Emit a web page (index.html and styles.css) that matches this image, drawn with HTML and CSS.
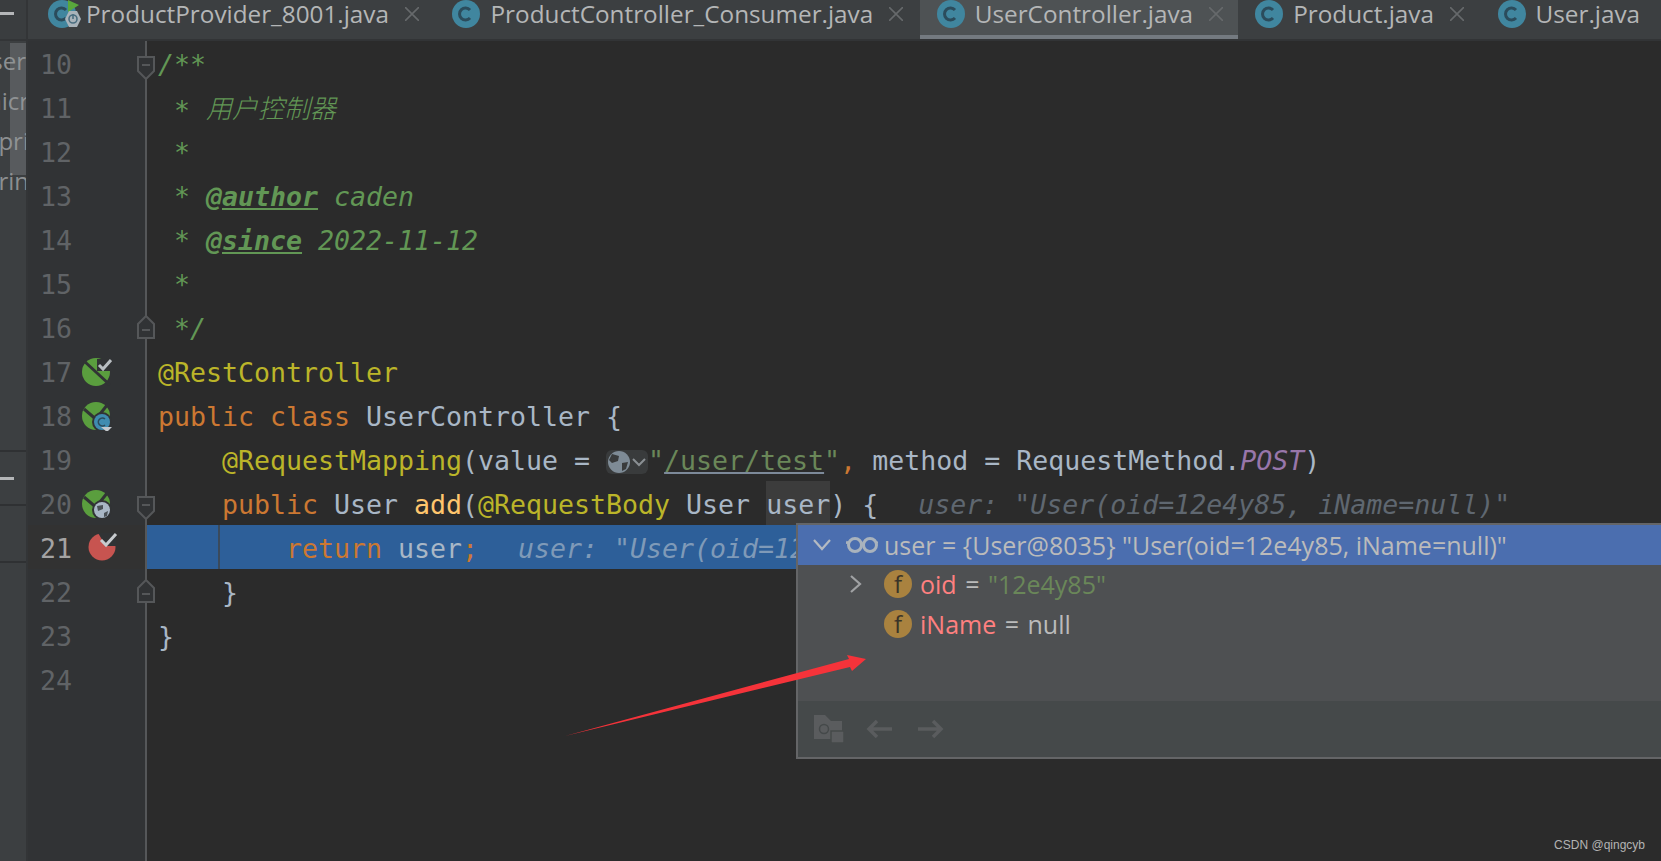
FILE: index.html
```html
<!DOCTYPE html>
<html lang="en">
<head>
<meta charset="utf-8">
<title>UserController.java</title>
<link rel="stylesheet" href="styles.css">
</head>
<body>
<div class="ide">
  <aside class="stripe">
    <div class="stripe-head"><span class="dash"></span></div>
    <div class="tree">
      <div class="tree-row exact"><span>user</span></div>
      <div class="tree-row"><span>micr</span></div>
      <div class="tree-row"><span>spri</span></div>
      <div class="tree-row"><span>sprin</span></div>
      <div class="tree-thumb"></div>
    </div>
    <div class="stripe-sec s1"><span class="dash"></span></div>
    <div class="stripe-sec s2"></div>
  </aside>
  <main class="main">
    <nav class="tabs">
      <div class="tab first">
        <svg class="ticon" viewBox="0 0 34 28"><circle cx="14" cy="14" r="14" fill="#40869f"/><path d="M18 10a6 6 0 1 0 0 8" fill="none" stroke="#2b4c5c" stroke-width="3"/><path d="M20 0l11 5-11 7z" fill="#59a83c"/><path d="M21 11l8 0 4 8-4 8-8 0-4-8z" fill="#a9b3ba"/><circle cx="25" cy="19" r="4" fill="none" stroke="#4b6e80" stroke-width="1.6"/><path d="M25 14v5" stroke="#4b6e80" stroke-width="1.6"/></svg>
        <span class="tname">ProductProvider_8001.java</span>
        <svg class="tclose" viewBox="0 0 14 14"><path d="M0 0l14 14M14 0L0 14"/></svg>
      </div>
      <div class="tab">
        <svg class="cicon" viewBox="0 0 28 28"><circle cx="14" cy="14" r="14" fill="#40869f"/><path d="M18 10a6 6 0 1 0 0 8" fill="none" stroke="#2b4c5c" stroke-width="3"/></svg>
        <span class="tname">ProductController_Consumer.java</span>
        <svg class="tclose" viewBox="0 0 14 14"><path d="M0 0l14 14M14 0L0 14"/></svg>
      </div>
      <div class="tab active">
        <svg class="cicon" viewBox="0 0 28 28"><circle cx="14" cy="14" r="14" fill="#40869f"/><path d="M18 10a6 6 0 1 0 0 8" fill="none" stroke="#2b4c5c" stroke-width="3"/></svg>
        <span class="tname">UserController.java</span>
        <svg class="tclose" viewBox="0 0 14 14"><path d="M0 0l14 14M14 0L0 14"/></svg>
      </div>
      <div class="tab">
        <svg class="cicon" viewBox="0 0 28 28"><circle cx="14" cy="14" r="14" fill="#40869f"/><path d="M18 10a6 6 0 1 0 0 8" fill="none" stroke="#2b4c5c" stroke-width="3"/></svg>
        <span class="tname">Product.java</span>
        <svg class="tclose" viewBox="0 0 14 14"><path d="M0 0l14 14M14 0L0 14"/></svg>
      </div>
      <div class="tab">
        <svg class="cicon" viewBox="0 0 28 28"><circle cx="14" cy="14" r="14" fill="#40869f"/><path d="M18 10a6 6 0 1 0 0 8" fill="none" stroke="#2b4c5c" stroke-width="3"/></svg>
        <span class="tname">User.java</span>
      </div>
    </nav>
    <section class="editor">
      <div class="line"><div class="gut"><span class="num">10</span><svg class="fold open" viewBox="0 0 18 24"><path d="M1 1h16v14l-8 8-8-8z"/><path d="M5 9h8"/></svg></div><div class="code"><span class="cm">/**</span></div></div>
      <div class="line"><div class="gut"><span class="num">11</span></div><div class="code"><span class="cm"> * <span class="cjk">用户控制器</span></span></div></div>
      <div class="line"><div class="gut"><span class="num">12</span></div><div class="code"><span class="cm"> *</span></div></div>
      <div class="line"><div class="gut"><span class="num">13</span></div><div class="code"><span class="cm"> * <b>@author</b> caden</span></div></div>
      <div class="line"><div class="gut"><span class="num">14</span></div><div class="code"><span class="cm"> * <b>@since</b> 2022-11-12</span></div></div>
      <div class="line"><div class="gut"><span class="num">15</span></div><div class="code"><span class="cm"> *</span></div></div>
      <div class="line"><div class="gut"><span class="num">16</span><svg class="fold close" viewBox="0 0 18 24"><path d="M1 23h16V9L9 1 1 9z"/><path d="M5 15h8"/></svg></div><div class="code"><span class="cm"> */</span></div></div>
      <div class="line"><div class="gut"><span class="num">17</span>
        <svg class="gicon" viewBox="0 0 30 30"><circle cx="14" cy="15" r="14" fill="#5a9e3e"/><path d="M2 4l26 24" stroke="#313335" stroke-width="3"/><path d="M15 2l14 0 0 12-14 0z" fill="#313335"/><path d="M17 8l4 4 8-9" fill="none" stroke="#b9bec2" stroke-width="3"/></svg></div><div class="code"><span class="an">@RestController</span></div></div>
      <div class="line"><div class="gut"><span class="num">18</span>
        <svg class="gicon" viewBox="0 0 30 30"><circle cx="14" cy="15" r="14" fill="#5a9e3e"/><path d="M2 8l14 12M14 18L26 3" stroke="#313335" stroke-width="3"/><circle cx="20" cy="21" r="10" fill="#313335"/><circle cx="20" cy="21" r="8" fill="#3f8cb0"/><path d="M23 18a4 4 0 1 0 0 6" fill="none" stroke="#2b4c5c" stroke-width="1.6"/><path d="M19 26h11l-5 5z" fill="#c3c8cc"/></svg></div><div class="code"><span class="kw">public class </span>UserController {</div></div>
      <div class="line"><div class="gut"><span class="num">19</span></div><div class="code">    <span class="an">@RequestMapping</span>(value = <span class="inlay"><svg class="globe" viewBox="0 0 24 24"><circle cx="12" cy="12" r="11" fill="#7e8b96"/><path d="M5 4l7 2-1 5-6 2-3-3zM15 13l6-1-2 7-4 2z" fill="#393b3c"/></svg><svg class="inchev" viewBox="0 0 14 10"><path d="M1 2l6 6 6-6"/></svg></span><span class="st">"<u>/user/test</u>"</span><span class="kw">,</span> method = RequestMethod.<i class="pu">POST</i>)</div></div>
      <div class="line"><div class="gut"><span class="num">20</span><svg class="gicon" viewBox="0 0 30 30"><circle cx="14" cy="15" r="14" fill="#5a9e3e"/><path d="M2 8l14 12M14 18L26 3" stroke="#313335" stroke-width="3"/><circle cx="20" cy="21" r="10" fill="#313335"/><circle cx="20" cy="21" r="8" fill="#a9b7c6"/><path d="M15 17l6-1 0 4-5 2zM22 24l4-2-1 5-3 1z" fill="#4a5157"/></svg><svg class="fold open" viewBox="0 0 18 24"><path d="M1 1h16v14l-8 8-8-8z"/><path d="M5 9h8"/></svg></div><div class="code">    <span class="kw">public </span>User <span class="fn">add</span>(<span class="an">@RequestBody</span> User <span class="usage">user</span>) {<span class="hint">user: "User(oid=12e4y85, iName=null)"</span></div></div>
      <div class="line current"><div class="gut"><span class="num">21</span><svg class="gicon bp" viewBox="0 0 30 30"><circle cx="14" cy="16" r="13.5" fill="#c75450"/><path d="M10 2l18 0 0 13-10 0z" fill="#313335"/><path d="M13 9l5 5 10-11" fill="none" stroke="#c8cbce" stroke-width="3"/></svg></div><div class="code"><span class="guide"></span>        <span class="kw">return </span>user<span class="kw">;</span><span class="hint">user: "User(oid=12e4y85, iName=null)"</span></div></div>
      <div class="line"><div class="gut"><span class="num">22</span><svg class="fold close" viewBox="0 0 18 24"><path d="M1 23h16V9L9 1 1 9z"/><path d="M5 15h8"/></svg></div><div class="code">    }</div></div>
      <div class="line"><div class="gut"><span class="num">23</span></div><div class="code">}</div></div>
      <div class="line"><div class="gut"><span class="num">24</span></div><div class="code"></div></div>
      <div class="line fill"><div class="gut"></div><div class="code"></div></div>
    </section>
  </main>

  <div class="popup">
    <div class="row head">
      <svg class="chev" viewBox="0 0 18 12"><path d="M1 1l8 9 8-9"/></svg>
      <svg class="glasses" viewBox="0 0 32 16"><circle cx="9" cy="8" r="6.5"/><circle cx="24" cy="8" r="6.5"/><path d="M15 7h3M2 6L0 5M31 6l1-1"/></svg>
      <span class="vtext">user = {User@8035} "User(oid=12e4y85, iName=null)"</span>
    </div>
    <div class="row field">
      <svg class="chevr" viewBox="0 0 12 18"><path d="M1 1l9 8-9 8"/></svg>
      <span class="fbadge">f</span>
      <span class="vtext"><span class="fname">oid</span> = <span class="vstr">"12e4y85"</span></span>
    </div>
    <div class="row field">
      <span class="chevr-space"></span>
      <span class="fbadge">f</span>
      <span class="vtext"><span class="fname">iName</span> = null</span>
    </div>
    <div class="pop-foot">
      <svg class="ficon folder" viewBox="0 0 30 28"><path d="M0 0h11l6 6h11v18H0z" fill="#5a5c5e"/><circle cx="10" cy="14" r="4.5" fill="none" stroke="#45494a" stroke-width="1.5"/><path d="M17 16h13v12H17z" fill="#5a5c5e" stroke="#45494a" stroke-width="1.5"/></svg>
      <svg class="ficon arrow" viewBox="0 0 26 20"><path d="M26 10H3M11 2l-8 8 8 8"/></svg>
      <svg class="ficon arrow" viewBox="0 0 26 20"><path d="M0 10h23M15 2l8 8-8 8"/></svg>
    </div>
  </div>

  <svg class="annot" viewBox="0 0 1661 861"><path d="M565 736L849 659 847 655 866 659 852 671 850 667z" fill="#f5333a"/></svg>
  <div class="mark">CSDN @qingcyb</div>
</div>
</body>
</html>
```
FILE: styles.css
```css
* { box-sizing: border-box; }
html, body { margin: 0; padding: 0; background: #2b2b2b; }
.ide { position: relative; width: 1661px; height: 861px; overflow: hidden; display: flex; background: #2b2b2b; }

.stripe { width: 28px; flex: none; display: flex; flex-direction: column; background: #3c3f41; border-right: 2px solid #333537; }
.stripe-head { height: 41px; flex: none; padding-top: 12px; background: #3a3d3f; border-bottom: 2px solid #333537; }
.dash { display: block; width: 14px; height: 3px; background: #b4b6b8; }
.tree { position: relative; height: 411px; flex: none; border-bottom: 2px solid #2f3133; }
.tree-row { height: 40px; display: flex; justify-content: flex-end; overflow: hidden; font: 24px/40px "Open Sans", sans-serif; color: #8c8f91; white-space: nowrap; }
.tree-row span { margin-right: -3px; }
.tree-row.exact span { margin-right: 0; }
.tree-thumb { position: absolute; left: 10px; top: 2px; width: 16px; height: 132px; background: rgba(150,152,155,.32); }
.stripe-sec { flex: none; }
.stripe-sec.s1 { height: 54px; display: flex; align-items: center; border-bottom: 2px solid #2f3133; }
.stripe-sec.s2 { height: 57px; border-bottom: 2px solid #2f3133; }

.main { flex: 1; min-width: 0; display: flex; flex-direction: column; }
.tabs { height: 41px; flex: none; display: flex; background: #3c3f41; border-bottom: 2px solid #323436; overflow: hidden; padding-left: 3px; }
.tab { height: 41px; flex: none; display: flex; align-items: center; padding: 0 16.5px 14px 17px; }
.tab.active { background: #4e5254; border-bottom: 6px solid #747a80; padding: 0 15px 8px 17px; }
.cicon { width: 28px; height: 28px; flex: none; margin-right: 10px; }
.ticon { width: 34px; height: 28px; flex: none; margin-right: 4px; }
.tname { font: 24.3px/28px "Open Sans", sans-serif; color: #b4b6b7; white-space: nowrap; }
.tclose { width: 14px; height: 14px; flex: none; margin-left: 16px; fill: none; stroke: #66696b; stroke-width: 1.6; }

.editor { flex: 1; min-height: 0; display: flex; flex-direction: column; }
.line { height: 44px; flex: none; display: flex; }
.line.fill { flex: 1; height: auto; }
.gut { position: relative; width: 119px; flex: none; background: #313335; border-right: 2px solid #555759; padding-left: 12px; }
.num { font: 26.58px/48px "DejaVu Sans Mono", monospace; color: #606366; }
.current .gut { background: #323232; }
.current .num { color: #a4a3a3; }
.code { position: relative; isolation: isolate; flex: 1; padding-left: 11px; font: 26.58px/48px "DejaVu Sans Mono", monospace; color: #a9b7c6; white-space: pre; }
.current .code { background: #2d5f99; }
.guide { position: absolute; left: 71px; top: 0; width: 2px; height: 44px; background: #3a4a5c; }
.cm { color: #629755; font-style: italic; }
.cm b { font-weight: 700; text-decoration: underline; }
.cjk { position: relative; top: -2px; font-family: "Noto Sans CJK SC", sans-serif; font-size: 26px; font-weight: 300; }
.an { color: #bbb529; }
.kw { color: #cc7832; }
.st { color: #6a8759; }
.st u { text-decoration-color: #7d8a9a; }
.fn { color: #ffc66d; }
.pu { color: #9876aa; }
.usage { position: relative; }
.usage::before { content: ""; position: absolute; left: 0; right: 0; top: -8px; height: 44px; background: #3c3c3c; z-index: -1; }
.hint { color: #5f6770; font-style: italic; margin-left: 40px; }
.current .hint { color: #7f9ab8; }
.inlay { display: inline-flex; align-items: center; gap: 1px; width: 42px; height: 24px; vertical-align: -4px; padding-left: 1px; background: #393b3c; border-radius: 6px; }
.globe { width: 24px; height: 24px; flex: none; }
.inchev { width: 14px; height: 10px; flex: none; fill: none; stroke: #8a8f93; stroke-width: 2; }

.gicon { position: absolute; left: 54px; top: 8px; width: 30px; height: 30px; }
.gicon.bp { left: 60px; top: 6px; }
.fold { position: absolute; left: 109px; width: 18px; height: 24px; fill: #313335; stroke: #555759; stroke-width: 2; }
.fold.open { top: 15px; }
.fold.close { top: 10px; }

.popup { position: absolute; left: 796px; top: 523px; width: 865px; height: 236px; display: flex; flex-direction: column; background: #4e5052; border: solid #646567; border-width: 2px 0 2px 2px; }
.row { height: 40px; flex: none; display: flex; align-items: center; }
.row.head { background: #4b6eaf; padding-left: 15px; }
.row.field { padding: 0 0 2px 52px; word-spacing: 2px; }
.chev { width: 18px; height: 12px; flex: none; margin-right: 15px; fill: none; stroke: #b4bac2; stroke-width: 2.2; }
.glasses { width: 32px; height: 16px; flex: none; margin-right: 6px; fill: none; stroke: #a9b3bd; stroke-width: 3; }
.chevr { width: 12px; height: 18px; flex: none; margin-right: 22px; fill: none; stroke: #a0a2a4; stroke-width: 2.2; }
.chevr-space { width: 12px; flex: none; margin-right: 22px; }
.fbadge { width: 28px; height: 28px; flex: none; margin-right: 8px; border-radius: 50%; background: #a9823f; color: #3a3428; font: 24px/28px "Open Sans", sans-serif; text-align: center; }
.vtext { font: 25px/40px "Open Sans", sans-serif; color: #bbbbbb; white-space: pre; }
.fname { color: #ff8080; }
.vstr { color: #6a8759; }
.pop-foot { margin-top: auto; height: 56px; flex: none; display: flex; align-items: center; gap: 22px; padding-left: 16px; background: #45494a; }
.ficon.folder { width: 30px; height: 28px; flex: none; }
.ficon.arrow { width: 26px; height: 20px; flex: none; fill: none; stroke: #5a5c5e; stroke-width: 3.5; }
.ficon.arrow + .ficon.arrow { margin-left: 4px; }

.annot { position: absolute; left: 0; top: 0; width: 1661px; height: 861px; pointer-events: none; }
.mark { position: absolute; right: 16px; top: 837px; font: 12px/16px "Liberation Sans", sans-serif; color: #b4b4b4; }
```
